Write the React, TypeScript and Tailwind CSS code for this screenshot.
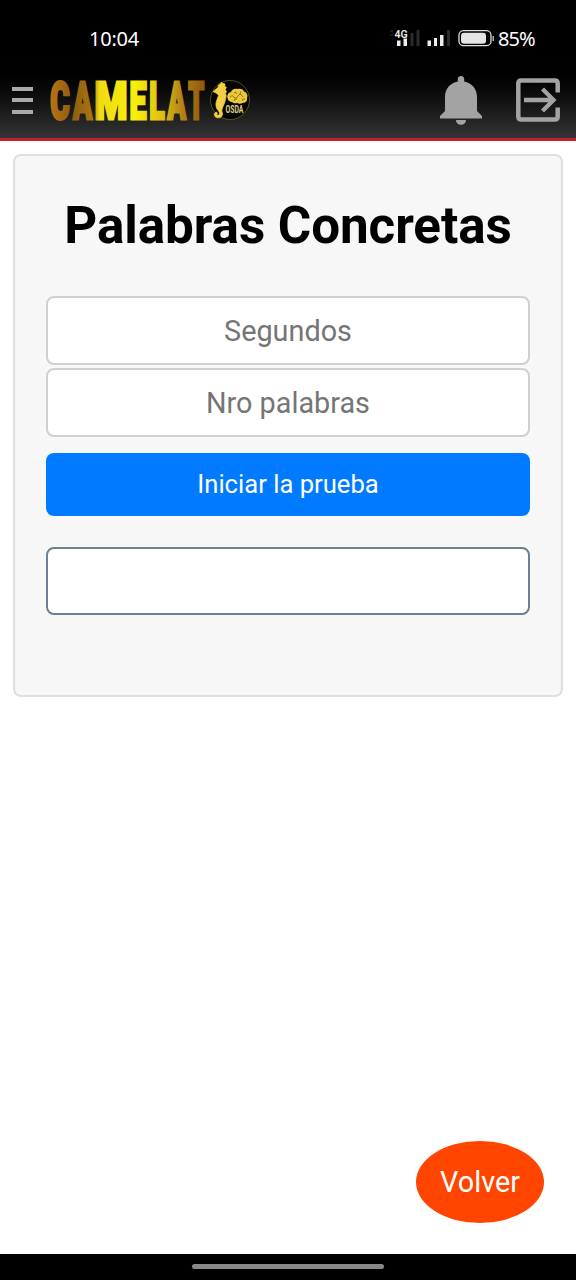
const StatusBar = () => {
  return (
    <div className="flex h-[62px] items-start justify-between pl-[89px] pr-[41px] pt-[26px] text-[20px] leading-[26px] text-white">
      <span className="tracking-[-0.25px] font-['Noto_Sans']">10:04</span>

      <div className="flex items-center">
        {/* Signal bars and battery */}
        <svg width="108" height="26" viewBox="0 0 108 26" className="mr-[1px] overflow-visible">
          <path d="M1 5h3M1 9h3" stroke="#333" strokeWidth="1" />
          <path d="M22 20V7M28 20V4M58.500 20V4" stroke="#2b2b2b" strokeWidth="3" transform="translate(1 0)" />
          <g fill="#ececec">
            <path d="M8 14.500h3.500v5.500H8zM14.500 12.500h3.500v7.500h-3.500z" />
            <path d="M38.500 14.500h3.500v5.500h-3.500zM45 12h3v8h-3zM51 9h3.500v11H51z" />
            <text x="5.500" y="12" fontSize="10.500" fontWeight="600" fontFamily="Roboto, sans-serif">
              4G
            </text>
          </g>
          <rect x="70" y="4.700" width="32" height="15" rx="4.500" fill="none" stroke="#ddd" strokeWidth="1.300" />
          <rect x="72" y="6.700" width="25" height="11" rx="3" fill="#e4e4e4" />
          <path d="M104.200 10v5" stroke="#ccc" strokeWidth="1.300" />
        </svg>
        <span className="w-[37px] whitespace-nowrap text-[20px] tracking-[-0.9px] font-['Noto_Sans']">85%</span>
      </div>
    </div>
  );
};

const Logo = () => {
  return (
    <svg width="202" height="48" viewBox="0 0 202 48" className="ml-[15px] overflow-visible">
      <defs>
        <linearGradient id="gold" gradientUnits="userSpaceOnUse" x1="2" y1="0" x2="157" y2="0">
          <stop offset="0" stopColor="#b87416" />
          <stop offset="0.14" stopColor="#8f5c10" />
          <stop offset="0.27" stopColor="#a9740f" />
          <stop offset="0.32" stopColor="#f0dc12" />
          <stop offset="0.55" stopColor="#f8ee0c" />
          <stop offset="0.72" stopColor="#dfc010" />
          <stop offset="0.86" stopColor="#b08015" />
          <stop offset="1" stopColor="#8f560c" />
        </linearGradient>
      </defs>
      <text
        y="42.500"
        fill="url(#gold)"
        stroke="url(#gold)"
        strokeWidth="3"
        fontFamily="Roboto, sans-serif"
        fontWeight="900"
        fontSize="52.500"
      >
        <tspan x="2.300" textLength="19.500" lengthAdjust="spacingAndGlyphs">C</tspan>
        <tspan x="25" textLength="19" lengthAdjust="spacingAndGlyphs">A</tspan>
        <tspan x="46.500" textLength="33" lengthAdjust="spacingAndGlyphs">M</tspan>
        <tspan x="81.500" textLength="17" lengthAdjust="spacingAndGlyphs">E</tspan>
        <tspan x="101.300" textLength="15.500" lengthAdjust="spacingAndGlyphs">L</tspan>
        <tspan x="119.500" textLength="18.500" lengthAdjust="spacingAndGlyphs">A</tspan>
        <tspan x="140.200" textLength="16" lengthAdjust="spacingAndGlyphs">T</tspan>
      </text>

      {/* JOSDA seal */}
      <circle cx="182" cy="24" r="19.500" fill="#050505" stroke="#68601f" strokeWidth="0.800" />
      <path
        d="M165 15.500l5-4 .5-2.500 2-1.200 1-1.800 1.500 1.500 2 .5-.2 2 1.500 1.500-1 2 1.200 2-1 2 .8 2.500-.8 3-.7 3.500-2 4.500-1 3c0 2 .7 2.500.7 4 0 4-5 5-7.500 2.500-1.500-1.800-.5-4.500 1.500-4.200 1.200.3 1 1.500.2 2.200 1 1.200 2.800.8 2.800-1s-1.500-3-2.500-4.500c-1.500-3-1.500-6 0-9.500l1.500-4-1.500-2z"
        fill="#f2cf45"
        stroke="#f2cf45"
        strokeWidth="0.700"
      />
      <path
        d="M179.500 22c-.8-3 1-5.500 3.500-6 1-3 4-3.800 6.500-3 3-1 6 .5 6.500 2.500 3 1 4 4 3 6.500.5 3-1.500 5-4 4.700-2 1.500-4.500 1-6 .3-2 .7-4 0-5-1-2.500-.2-4-1.500-4.500-4z"
        fill="#edc83b"
      />
      <path
        d="M182 21q2-3 4 0t4-1 5 1M186 17q2-2 3 1M193 15.500l-1 3M186 25q0-3 3-2M194 25q0-3 3-2"
        fill="none"
        stroke="#695411"
        strokeWidth="0.700"
      />
      <text x="177.500" y="37" fontSize="11" fontWeight="700" fontFamily="Roboto, sans-serif" fill="#dccd87" textLength="18" lengthAdjust="spacingAndGlyphs">
        OSDA
      </text>
    </svg>
  );
};

const Navbar = () => {
  return (
    <nav className="flex h-[76px] items-center pl-3 pr-4">
      {/* Menu button */}
      <button className="flex w-[21px] flex-col gap-[7.5px]" aria-label="Menu">
        <span className="h-1 bg-[#aaa]" />
        <span className="h-1 bg-[#aaa]" />
        <span className="h-1 bg-[#aaa]" />
      </button>

      <Logo />

      <div className="ml-auto flex items-center gap-[34px]">
        <svg width="42" height="49" viewBox="0 0 42 49" fill="#a3a3a3">
          <path d="M21 0c2 0 3.200 1.400 3.200 3v2.500C32 7 37 13 37 21v14l5 5v2.500H0V40l5-5V21C5 13 10 7 17.800 5.500V3C17.800 1.400 19 0 21 0zM16 44h10c0 3-2.200 4.800-5 4.800S16 47 16 44z" />
        </svg>
        <svg width="44" height="44" viewBox="0 0 44 44" fill="none" stroke="#a3a3a3" strokeWidth="4.500">
          <path d="M41.700 14.500V5.500q0-3-3-3H5.300q-3 0-3 3v33q0 3 3 3h33.400q3 0 3-3v-9" />
          <path d="M8 22h29M26.500 11L37.500 22 26.500 33" strokeWidth="4.300" />
        </svg>
      </div>
    </nav>
  );
};

const App = () => {
  return (
    <div className="flex h-[1280px] w-[576px] flex-col bg-white font-[Roboto,sans-serif]">
      <header className="h-[141px] border-b-[3px] border-[#c5202a] bg-linear-to-b from-black from-40% to-[#353535]">
        <StatusBar />
        <Navbar />
      </header>

      <main className="flex flex-1 flex-col px-[13px] pt-[13px]">
        <section className="flex h-[543px] flex-col rounded-lg border-2 border-[#dfdfdf] bg-[#f7f7f7] px-[31px]">
          <h1 className="mt-[39px] whitespace-nowrap text-center text-[51.2px] font-bold leading-[62px] tracking-[-0.08px] text-black">
            Palabras Concretas
          </h1>

          <input
            className="mt-[39px] h-[69px] w-full rounded-lg border-2 border-[#d0d0d0] bg-white text-center text-[28.8px] placeholder:text-[#757575]"
            placeholder="Segundos"
          />
          <input
            className="mt-[3px] h-[69px] w-full rounded-lg border-2 border-[#d0d0d0] bg-white text-center text-[28.8px] placeholder:text-[#757575]"
            placeholder="Nro palabras"
          />
          <button className="mt-4 h-[63px] w-full rounded-lg bg-[#007bff] text-[25.6px] text-white">
            Iniciar la prueba
          </button>
          <input
            className="mt-[31px] h-[68px] w-full rounded-lg border-2 border-[#6d8093] bg-white text-center text-[28.8px]"
            aria-label="Respuesta"
          />
        </section>

        <button className="mb-[31px] mr-[19px] mt-auto h-[82px] w-32 self-end rounded-[50%] bg-[#ff4500] pt-[2px] text-[28.8px] text-white">
          Volver
        </button>
      </main>

      {/* Gesture bar */}
      <footer className="flex h-[26px] justify-center bg-black pt-[10px]">
        <div className="h-[5px] w-48 rounded-full bg-[#888]" />
      </footer>
    </div>
  );
};

export default App;
